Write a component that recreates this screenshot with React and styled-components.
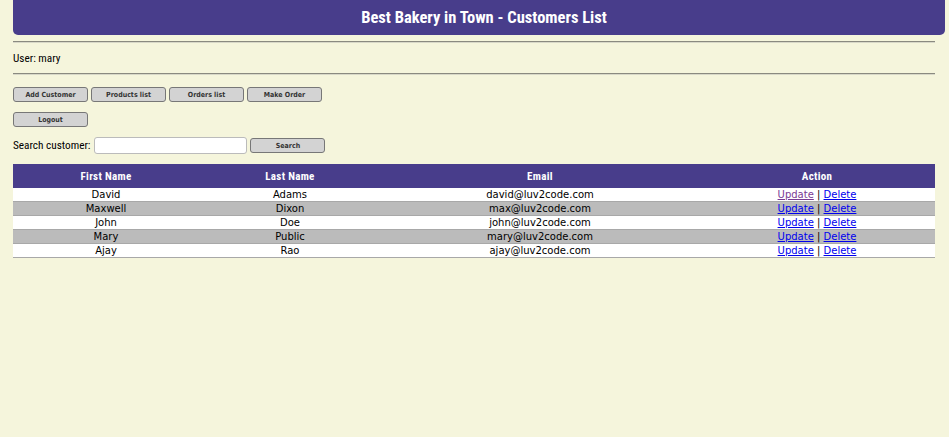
import React from "react";
import styled, { createGlobalStyle } from "styled-components";

const GlobalStyle = createGlobalStyle`
  body {
    margin: 0;
    background: #f5f5dc;
    font-family: "Roboto Condensed", "Liberation Sans", Arial, sans-serif;
    font-size: 11.25px;
    color: #000;
  }
`;

const Page = styled.div`
  padding: 0 14px 0 13px;
`;

const Header = styled.header`
  height: 35px;
  margin-right: -10px;
  padding-left: 10px;
  background: #483d8b;
  border-radius: 0 0 5px 5px;
  display: flex;
  align-items: center;
  justify-content: center;
  color: #fff;
  font-family: "Roboto Condensed", "Roboto", sans-serif;
  font-weight: bold;
  font-size: 16.5px;
`;

const Rule = styled.hr`
  margin: ${(p) => p.$top}px 0 0;
  border: none;
  border-top: 1px solid #8a8a80;
  border-bottom: 1px solid #d8d8c8;
`;

const UserLine = styled.div`
  height: 30px;
  display: flex;
  align-items: center;
`;

const ButtonRow = styled.div`
  display: flex;
  gap: 3px;
  margin-top: ${(p) => p.$top}px;
`;

const Button = styled.button`
  width: 75px;
  height: 15px;
  padding: 0;
  border: 1px solid #777;
  border-radius: 3px;
  background: #d3d3d3;
  color: #333;
  font-family: "DejaVu Sans Condensed", "DejaVu Sans", sans-serif;
  font-weight: bold;
  font-size: 7px;
  cursor: pointer;
`;

const SearchRow = styled.form`
  display: flex;
  align-items: center;
  margin-top: 10px;
  gap: 3px;
`;

const Input = styled.input`
  width: 147px;
  height: 13px;
  margin-left: 1px;
  border: 1px solid #bbb;
  border-radius: 3px;
  background: #fff;
`;

const Table = styled.table`
  width: 922px;
  margin-top: 10px;
  border-collapse: collapse;
  font-family: "DejaVu Sans", Verdana, sans-serif;
  font-size: 10px;
`;

const Th = styled.th`
  height: 24px;
  padding: 0;
  background: #483d8b;
  color: #fff;
  font-family: "Roboto Condensed", "Roboto", sans-serif;
  font-weight: bold;
  font-size: 11px;
  letter-spacing: 0.3px;
  width: ${(p) => p.$w}px;
`;

const Row = styled.tr`
  background: ${(p) => (p.$alt ? "#bbbbbb" : "#ffffff")};
  border-bottom: 1px solid #a8a8a8;
`;

const Td = styled.td`
  height: 13px;
  padding: 0;
  line-height: 13px;
  text-align: center;
`;

const Link = styled.a`
  color: ${(p) => (p.$visited ? "#7a3b94" : "#0000ee")};
  text-decoration: underline;
`;

const customers = [
  ["David", "Adams", "david@luv2code.com"],
  ["Maxwell", "Dixon", "max@luv2code.com"],
  ["John", "Doe", "john@luv2code.com"],
  ["Mary", "Public", "mary@luv2code.com"],
  ["Ajay", "Rao", "ajay@luv2code.com"],
];

export default function App() {
  return (
    <Page>
      <GlobalStyle />
      <Header>Best Bakery in Town - Customers List</Header>
      <Rule $top={6} />
      <UserLine>User: mary</UserLine>
      <Rule $top={0} />
      <ButtonRow $top={12}>
        <Button>Add Customer</Button>
        <Button>Products list</Button>
        <Button>Orders list</Button>
        <Button>Make Order</Button>
      </ButtonRow>
      <ButtonRow $top={10}>
        <Button>Logout</Button>
      </ButtonRow>
      <SearchRow onSubmit={(e) => e.preventDefault()}>
        <span>Search customer:</span>
        <Input type="text" />
        <Button type="submit">Search</Button>
      </SearchRow>
      <Table>
        <thead>
          <tr>
            <Th $w={186}>First Name</Th>
            <Th $w={182}>Last Name</Th>
            <Th $w={318}>Email</Th>
            <Th $w={236}>Action</Th>
          </tr>
        </thead>
        <tbody>
          {customers.map(([first, last, email], i) => (
            <Row key={email} $alt={i % 2 === 1}>
              <Td>{first}</Td>
              <Td>{last}</Td>
              <Td>{email}</Td>
              <Td>
                <Link href="#" $visited={i === 0}>Update</Link> |{" "}
                <Link href="#">Delete</Link>
              </Td>
            </Row>
          ))}
        </tbody>
      </Table>
    </Page>
  );
}
